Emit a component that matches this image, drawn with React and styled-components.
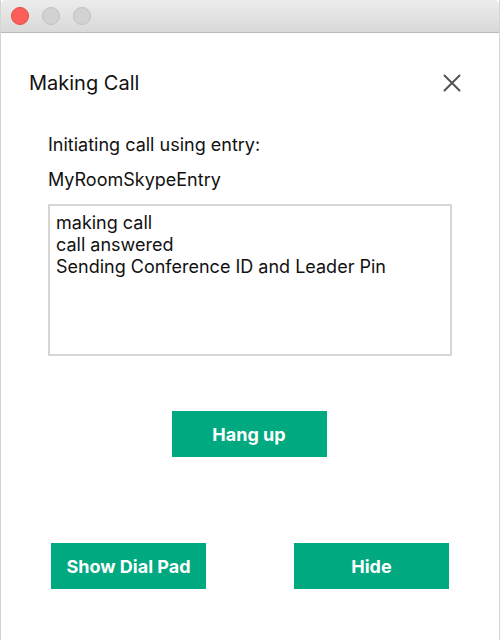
import React from "react";
import styled, { createGlobalStyle } from "styled-components";

const GlobalStyle = createGlobalStyle`
  html, body {
    margin: 0;
    padding: 0;
    background: #fff;
  }
  body {
    font-family: Inter, "Liberation Sans", Arial, sans-serif;
    -webkit-font-smoothing: antialiased;
  }
`;

const Window = styled.div`
  width: 500px;
  height: 640px;
  box-sizing: border-box;
  border-left: 1px solid #d4d4d4;
  border-right: 1px solid #d4d4d4;
  display: flex;
  flex-direction: column;
  overflow: hidden;
`;

const TitleBar = styled.div`
  height: 32px;
  flex-shrink: 0;
  display: flex;
  align-items: center;
  gap: 13px;
  padding-left: 10px;
  background: linear-gradient(#ececec, #d9d9d9);
  border-bottom: 1px solid #b9b9b9;
  border-top-left-radius: 5px;
  border-top-right-radius: 5px;
`;

const Light = styled.span`
  width: 18px;
  height: 18px;
  border-radius: 50%;
  box-sizing: border-box;
  background: ${(p) => (p.$active ? "#fc5f59" : "#d2d2d2")};
  border: 1px solid ${(p) => (p.$active ? "#e3483f" : "#c0c0c0")};
`;

const Body = styled.div`
  flex: 1;
  display: flex;
  flex-direction: column;
  padding: 38px 38px 0 28px;
`;

const Header = styled.div`
  display: flex;
  align-items: center;
  justify-content: space-between;
  height: 24px;
`;

const Title = styled.h1`
  margin: 0;
  font-size: 20px;
  font-weight: 400;
  color: #111;
`;

const CloseButton = styled.button`
  border: 0;
  background: none;
  padding: 0;
  width: 18px;
  height: 18px;
  display: flex;
  cursor: pointer;
`;

const Content = styled.div`
  display: flex;
  flex-direction: column;
  padding-left: 19px;
  margin-top: 40px;
`;

const Label = styled.p`
  margin: 0 0 15px;
  font-size: 18px;
  line-height: 20px;
  color: #111;
`;

const Log = styled.div`
  width: 404px;
  height: 152px;
  box-sizing: border-box;
  border: 2px solid #d6d6d6;
  padding: 6px 6px;
  font-size: 18px;
  line-height: 22px;
  color: #111;
  margin-top: -1px;
`;

const Center = styled.div`
  display: flex;
  justify-content: center;
  padding-left: 8px;
  margin-top: 55px;
`;

const Footer = styled.div`
  display: flex;
  justify-content: space-between;
  padding: 0 50px 51px;
`;

const ActionButton = styled.button`
  width: 155px;
  height: 46px;
  border: 0;
  border-radius: 0;
  padding: 0;
  background: #00a980;
  color: #fff;
  font-family: inherit;
  font-size: 18px;
  font-weight: 700;
  cursor: pointer;
`;

const CloseIcon = () => (
  <svg width="18" height="18" viewBox="0 0 18 18">
    <path d="M1.5 1.5 L16.5 16.5 M16.5 1.5 L1.5 16.5" stroke="#555" strokeWidth="2" strokeLinecap="round" />
  </svg>
);

const logLines = ["making call", "call answered", "Sending Conference ID and Leader Pin"];

export default function App() {
  return (
    <>
      <GlobalStyle />
      <Window>
        <TitleBar>
          <Light $active />
          <Light />
          <Light />
        </TitleBar>
        <Body>
          <Header>
            <Title>Making Call</Title>
            <CloseButton aria-label="Close">
              <CloseIcon />
            </CloseButton>
          </Header>
          <Content>
            <Label>Initiating call using entry:</Label>
            <Label>MyRoomSkypeEntry</Label>
            <Log>
              {logLines.map((line) => (
                <div key={line}>{line}</div>
              ))}
            </Log>
          </Content>
          <Center>
            <ActionButton>Hang up</ActionButton>
          </Center>
        </Body>
        <Footer>
          <ActionButton>Show Dial Pad</ActionButton>
          <ActionButton>Hide</ActionButton>
        </Footer>
      </Window>
    </>
  );
}
